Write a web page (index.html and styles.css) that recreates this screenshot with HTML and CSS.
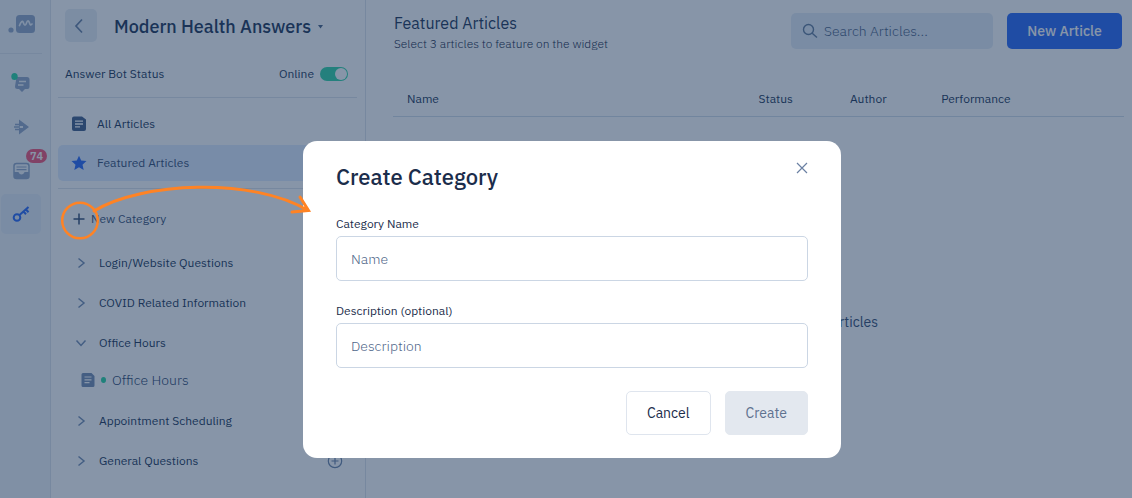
FILE: index.html
```html
<!DOCTYPE html>
<html lang="en">
<head>
<meta charset="utf-8">
<title>Modern Health Answers</title>
<meta name="viewport" content="width=device-width, initial-scale=1">
<link rel="stylesheet" href="styles.css">
</head>
<body>
<div class="app">
  <nav class="rail" aria-label="Main">
    <a class="logo" href="#" aria-label="Home">
      <svg width="28" height="20" viewBox="0 0 28 20"><circle cx="3" cy="16" r="2.600" fill="currentColor"/><rect x="8" y="1" width="19" height="18" rx="3.500" fill="currentColor"/><path d="M11.500 11.500c1.500-4 3-5.500 4-2.500s2 3 3 0 2.200-2.500 3 0 1 2.500 2.500 1" fill="none" stroke="#eef3f9" stroke-width="1.700" stroke-linecap="round"/></svg>
    </a>
    <a class="rail-item" href="#" aria-label="Chats">
      <svg width="22" height="22" viewBox="0 0 22 22"><path d="M6.500 5h10.500a2.500 2.500 0 0 1 2.500 2.500v7.500a2 2 0 0 1-2 2H15l-3 3-3-3H7.500a2.500 2.500 0 0 1-2.500-2.500z" fill="currentColor"/><path d="M9 9.500h7M8 13h5.500" stroke="#f1f5f9" stroke-width="1.400"/><ellipse cx="4.500" cy="4.500" rx="3.200" ry="3.500" fill="#2fd6a4"/></svg>
    </a>
    <a class="rail-item" href="#" aria-label="Campaigns">
      <svg width="22" height="22" viewBox="0 0 22 22"><path d="M9 3.500 19 11 9 18.500v-6.500h4v-2H9z" fill="currentColor"/><path d="M5 8.500h4M4 11h6M5 13.500h4" stroke="currentColor" stroke-width="1.300"/></svg>
    </a>
    <a class="rail-item" href="#" aria-label="Inbox, 74 unread">
      <svg width="22" height="22" viewBox="0 0 22 22"><rect x="4" y="3.500" width="15" height="15" rx="2.500" fill="none" stroke="currentColor" stroke-width="1.500"/><path d="M4 12h4.500c.7 3.300 5.300 3.300 6 0H19v4.500a2 2 0 0 1-2 2H6a2 2 0 0 1-2-2z" fill="currentColor"/><path d="M6.500 7h10M6.500 9.700h10" stroke="currentColor" stroke-width="1.200"/></svg>
      <span class="badge">74</span>
    </a>
    <a class="rail-item rail-item-active" href="#" aria-label="Answers">
      <svg width="22" height="22" viewBox="0 0 22 22" fill="none" stroke="currentColor" stroke-width="2"><circle cx="7" cy="14.500" r="3.300"/><path d="m9.500 12 9-8M13.500 8.500l2.500 2.700M16 6.500l2.500 2.700"/></svg>
    </a>
  </nav>

  <aside class="sidebar">
    <div class="side-head">
      <button class="back" type="button" aria-label="Back"><svg width="16" height="16" viewBox="0 0 16 16"><path d="M9 1.500 3 8l6 6.500" fill="none" stroke="currentColor" stroke-width="1.700"/></svg></button>
      <button class="site" type="button">Modern Health Answers <svg width="5" height="4" viewBox="0 0 5 4"><path d="M0 0h5L2.500 3.500z" fill="currentColor"/></svg></button>
    </div>
    <div class="status">
      <span>Answer Bot Status</span>
      <label class="switch">Online <input type="checkbox" checked></label>
    </div>
    <ul class="links">
      <li><a class="link" href="#"><svg class="icon-doc" width="16" height="16" viewBox="0 0 16 16"><path d="M3 .5h8l4 3V13a2 2 0 0 1-2 2H3a2 2 0 0 1-2-2V2.500a2 2 0 0 1 2-2z" fill="currentColor"/><path d="M4 5.200h8M4 8h8M4 10.800h5" stroke="#fff" stroke-width="1.300"/></svg>All Articles</a></li>
      <li><a class="link link-active" href="#"><svg class="icon-star" width="16" height="16" viewBox="0 0 16 16"><path d="m8 .7 2.200 4.800 5.300.6-4 3.600 1.200 5.300L8 12.300 3.300 15l1.200-5.300-4-3.600 5.300-.6z" fill="currentColor"/></svg>Featured Articles</a></li>
    </ul>
    <button class="new-category" type="button"><svg width="12" height="12" viewBox="0 0 12 12"><path d="M6 .5v11M.5 6h11" stroke="currentColor" stroke-width="1.500"/></svg>New Category</button>
    <ul class="tree">
      <li><button class="node" type="button"><svg width="12" height="12" viewBox="0 0 12 12"><path d="m3.500 1.500 5.500 4.500-5.500 4.500"/></svg>Login/Website Questions</button></li>
      <li><button class="node" type="button"><svg width="12" height="12" viewBox="0 0 12 12"><path d="m3.500 1.500 5.500 4.500-5.500 4.500"/></svg>COVID Related Information</button></li>
      <li><button class="node" type="button" aria-expanded="true"><svg width="12" height="12" viewBox="0 0 12 12"><path d="m1.500 3.500 4.500 5 4.500-5"/></svg>Office Hours</button>
        <a class="leaf" href="#"><svg width="14" height="16" viewBox="0 0 14 16"><path d="M2 1h8.500L13.500 4v9.500a1.500 1.500 0 0 1-1.500 1.500H2A1.500 1.500 0 0 1 .5 13.500v-11A1.500 1.500 0 0 1 2 1z" fill="currentColor"/><path d="M3.500 5h7M3.500 7.800h7M3.500 10.600h5" stroke="#fff" stroke-width="1.200"/></svg><span class="dot"></span>Office Hours</a></li>
      <li><button class="node" type="button"><svg width="12" height="12" viewBox="0 0 12 12"><path d="m3.500 1.500 5.500 4.500-5.500 4.500"/></svg>Appointment Scheduling</button></li>
      <li class="row"><button class="node" type="button"><svg width="12" height="12" viewBox="0 0 12 12"><path d="m3.500 1.500 5.500 4.500-5.500 4.500"/></svg>General Questions</button>
        <button class="add" type="button" aria-label="Add article"><svg width="16" height="16" viewBox="0 0 16 16" fill="none" stroke="currentColor" stroke-width="1.200"><circle cx="8" cy="8" r="6.700"/><path d="M8 4.500v7M4.500 8h7"/></svg></button></li>
    </ul>
  </aside>

  <main class="main">
    <header class="head">
      <div class="head-text">
        <h1>Featured Articles</h1>
        <p>Select 3 articles to feature on the widget</p>
      </div>
      <label class="search">
        <svg width="16" height="16" viewBox="0 0 16 16" fill="none" stroke="currentColor" stroke-width="1.400"><circle cx="6.500" cy="6.500" r="5"/><path d="m10.200 10.200 4.800 4.300"/></svg>
        <input type="search" placeholder="Search Articles..." aria-label="Search articles">
      </label>
      <button class="primary" type="button">New Article</button>
    </header>
    <table class="table">
      <thead><tr><th class="col-name">Name</th><th class="col-status">Status</th><th class="col-author">Author</th><th>Performance</th></tr></thead>
    </table>
    <p class="empty">There are no current Featured Articles</p>
  </main>
</div>

<div class="overlay">
  <form class="modal" role="dialog" aria-labelledby="modal-title">
    <div class="modal-head">
      <h2 id="modal-title">Create Category</h2>
      <button class="close" type="button" aria-label="Close"><svg width="12" height="12" viewBox="0 0 12 12"><path d="m1 1 10 10M11 1 1 11" stroke="currentColor" stroke-width="1.200"/></svg></button>
    </div>
    <label class="field-label" for="name">Category Name</label>
    <input class="field" id="name" type="text" placeholder="Name">
    <label class="field-label" for="description">Description (optional)</label>
    <input class="field" id="description" type="text" placeholder="Description">
    <div class="actions">
      <button class="btn" type="button">Cancel</button>
      <button class="btn btn-disabled" type="submit" disabled>Create</button>
    </div>
  </form>
</div>

<svg class="pointer" width="256" height="64" viewBox="0 0 256 64" fill="none" stroke="#ff8324" stroke-width="2.500" stroke-linecap="round" aria-hidden="true">
  <circle cx="20" cy="40.500" r="17.800"/>
  <path stroke-width="3" d="M34 31C81 2 193-3 248 30.500M240 17l8.500 13.500-16.500 1.500"/>
</svg>
</body>
</html>
```
FILE: styles.css
```css
* { box-sizing: border-box; }

body {
  margin: 0;
  font-family: "IBM Plex Sans", Roboto, sans-serif;
  font-size: 12px;
  line-height: 16px;
  color: #1b2d4b;
  background: #fff;
}

h1, h2, p, ul { margin: 0; padding: 0; }
ul { list-style: none; }
a { color: inherit; text-decoration: none; }
button, input { font: inherit; color: inherit; }
button { padding: 0; border: 0; background: none; cursor: pointer; }
svg { display: block; flex: none; }

.app { display: flex; min-height: 100vh; color: #263b5c; }

.rail {
  flex: none;
  width: 51px;
  background: #f1f5f9;
  border-right: 1px solid #dee5ed;
  color: #94a9c8;
}
.logo {
  display: block;
  width: 42px;
  height: 54px;
  margin-bottom: 7px;
  padding: 14px 0 0 8px;
  border-bottom: 1px solid #dee5ed;
}
.rail-item {
  position: relative;
  display: flex;
  align-items: center;
  justify-content: center;
  width: 40px;
  height: 44px;
  margin-left: 1px;
}
.rail-item-active {
  height: 40px;
  margin-top: 1px;
  border-radius: 5px;
  background: #e4ecf6;
  color: #2f6df6;
}
.badge {
  position: absolute;
  top: 0;
  left: 25px;
  padding: 0 4px;
  border-radius: 7px;
  background: #f2597a;
  color: #fff;
  font-size: 11px;
  font-weight: 600;
  line-height: 14px;
}

.sidebar {
  flex: none;
  width: 315px;
  padding: 9px 8px 0 7px;
  border-right: 1px solid #dee5ed;
}
.side-head { display: flex; align-items: center; gap: 17px; padding-left: 7px; }
.back {
  display: grid;
  place-items: center;
  width: 32px;
  height: 33px;
  border-radius: 5px;
  background: #e8eef5;
  color: #6d84a6;
}
.site {
  display: flex;
  align-items: center;
  gap: 7px;
  padding-top: 2px;
  font-size: 18px;
  font-weight: 500;
  line-height: 24px;
  white-space: nowrap;
}
.site svg { color: #4f6689; }
.status {
  display: flex;
  justify-content: space-between;
  align-items: center;
  margin-top: 24px;
  padding: 0 9px 15px 7px;
  border-bottom: 1px solid #dee5ed;
}
.switch { display: flex; align-items: center; gap: 6px; }
.switch input {
  appearance: none;
  width: 28px;
  height: 14px;
  margin: 0;
  padding: 1px;
  border-radius: 7px;
  background: #39d5a8;
}
.switch input::before {
  content: "";
  display: block;
  width: 12px;
  height: 12px;
  margin-left: 14px;
  border-radius: 50%;
  background: #fff;
}
.links { padding: 8px 0 7px; border-bottom: 1px solid #dee5ed; }
.link {
  display: flex;
  align-items: center;
  gap: 10px;
  height: 36px;
  padding-left: 13px;
  border-radius: 5px;
}
.links li + li { margin-top: 3px; }
.link-active { background: #e1edff; color: #3b5377; }
.icon-doc { color: #46628d; }
.icon-star { color: #2f6df6; }
.new-category {
  display: flex;
  align-items: center;
  gap: 6px;
  height: 40px;
  margin: 10px 0 4px 15px;
  color: #3b5377;
}
.tree { color: #7088ab; }
.node {
  display: flex;
  align-items: center;
  gap: 12px;
  height: 40px;
  padding-left: 17px;
  color: #263b5c;
}
.node path { fill: none; stroke: #7891b5; stroke-width: 1.5; }
.leaf {
  display: flex;
  align-items: center;
  gap: 6px;
  height: 38px;
  padding: 0 0 4px 23px;
  font-size: 14px;
  font-weight: 300;
  color: #304a70;
}
.leaf svg { color: #7891b5; }
.dot { width: 5px; height: 6px; border-radius: 50%; background: #2fd6a4; }
.row { display: flex; justify-content: space-between; align-items: center; padding-right: 14px; }

.main { flex: 1; min-width: 0; padding: 13px 8px 0 27px; }
.head { display: flex; align-items: flex-start; padding-right: 2px; }
.head-text { flex: 1; padding-left: 1px; white-space: nowrap; }
.head h1 { font-size: 16px; font-weight: 400; line-height: 20px; }
.head p { margin-top: 3px; font-weight: 300; color: #1b2d4b; }
.search {
  display: flex;
  align-items: center;
  gap: 6px;
  width: 202px;
  height: 36px;
  padding: 0 11px;
  border-radius: 5px;
  background: #e5edf6;
  color: #667f9f;
  font-size: 14px;
}
.search input { flex: 1; min-width: 0; padding: 0; border: 0; outline: 0; background: none; font-weight: 300; }
.search input::placeholder { color: #4f6689; opacity: 1; }
.primary {
  width: 115px;
  height: 36px;
  margin-left: 14px;
  border-radius: 5px;
  background: #2f6df6;
  color: #fff;
  font-size: 14px;
  font-weight: 500;
}
.table { width: 100%; margin-top: 32px; border-collapse: collapse; table-layout: fixed; }
.table th {
  height: 32px;
  padding: 0 0 2px;
  border-bottom: 1px solid #d3deea;
  text-align: left;
  font-weight: 400;
}
.table .col-name { width: 50%; padding-left: 14px; }
.table .col-status { width: 12.5%; }
.table .col-author { width: 12.5%; }
.empty { margin-top: 197px; text-align: center; font-size: 14px; color: #3b5377; }

.overlay {
  position: fixed;
  inset: 0;
  display: flex;
  justify-content: center;
  align-items: flex-start;
  padding: 141px 0 0 12px;
  background: rgba(15, 43, 81, 0.5);
}
.modal {
  width: 538px;
  padding: 17px 33px 23px;
  border-radius: 14px;
  background: #fff;
}
.modal-head { display: flex; justify-content: space-between; align-items: flex-start; margin-bottom: 26px; }
.modal h2 { padding-top: 6px; font-size: 22px; font-weight: 500; line-height: 26px; }
.close { display: grid; place-items: center; width: 12px; height: 20px; color: #6a80a3; }
.field-label { display: block; margin-bottom: 4px; }
.field {
  display: block;
  width: 100%;
  height: 45px;
  margin-bottom: 22px;
  padding: 0 14px;
  border: 1px solid #cbd6e4;
  border-radius: 5px;
  background: #fff;
  font-size: 14px;
  font-weight: 300;
}
.field::placeholder { color: #4f6689; opacity: 1; }
.actions { display: flex; justify-content: flex-end; gap: 14px; padding-top: 1px; }
.btn {
  height: 44px;
  padding: 0 20px;
  border: 1px solid #dfe5ee;
  border-radius: 5px;
  font-size: 14px;
}
.btn-disabled { border-color: #e3e8ef; background: #e3e8ef; color: #60728f; }

.pointer { position: absolute; top: 180px; left: 60px; pointer-events: none; }
```
